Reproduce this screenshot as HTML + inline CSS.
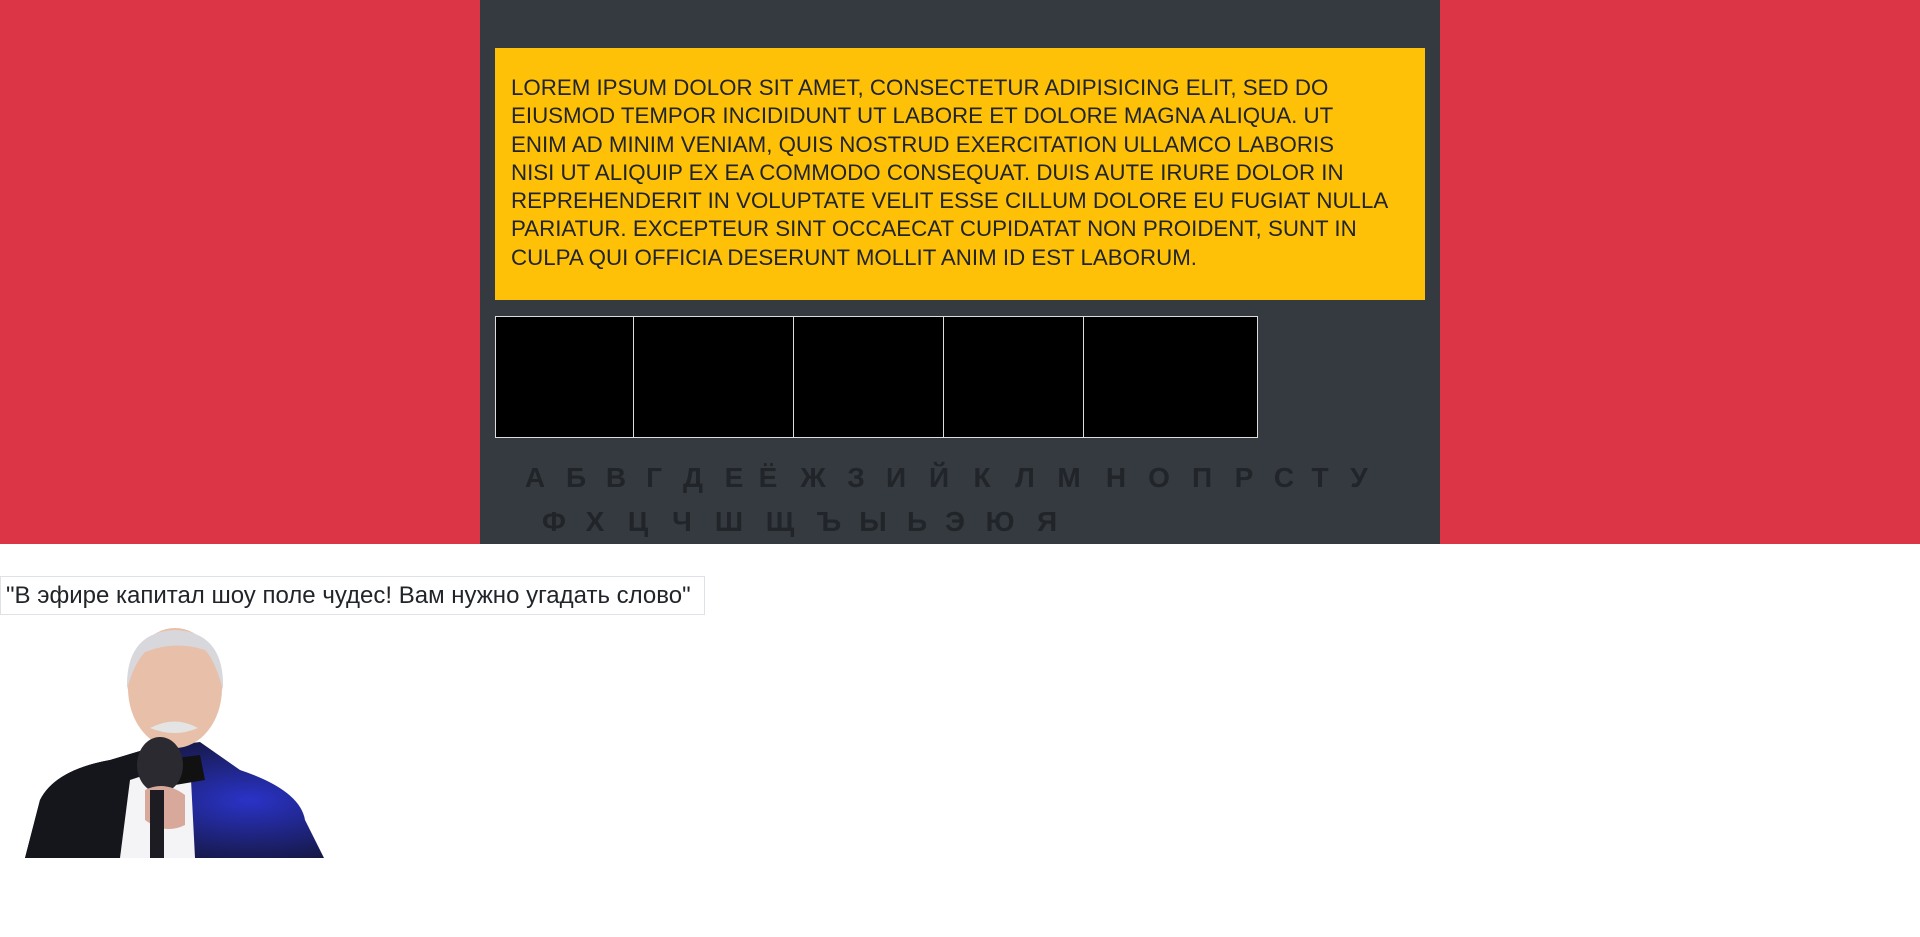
<!DOCTYPE html>
<html><head><meta charset="utf-8"><style>
*{margin:0;padding:0;box-sizing:border-box}
body{width:1920px;height:937px;background:#fff;position:relative;overflow:hidden;font-family:"Liberation Sans","DejaVu Sans",sans-serif}
.red{position:absolute;left:0;top:0;width:1920px;height:544px;background:#dc3545}
.panel{position:absolute;left:480px;top:0;width:960px;height:544px;background:#343a40}
.yel{position:absolute;left:495px;top:48px;width:930px;height:252px;background:#ffc107}
.txt{position:absolute;left:511px;top:74px;color:#212529;font-size:22.3px;line-height:28.3px}
.txt span{display:block;white-space:nowrap}
.bx{position:absolute;top:316px;height:122px;background:#000;border:1px solid #ddd}
.row{position:absolute;color:#212428;font-weight:bold;font-size:28px;white-space:nowrap;line-height:1}
.row b{position:absolute;transform:translateX(-50%)}
.cap{position:absolute;left:0;top:576px;width:705px;height:39px;border:1px solid #dee2e6;font-size:24px;line-height:37px;padding-left:5px;color:#212529;white-space:nowrap}
</style></head><body>
<div class="red"></div>
<div class="panel"></div>
<div class="yel"></div>
<div class="txt">
<span>LOREM IPSUM DOLOR SIT AMET, CONSECTETUR ADIPISICING ELIT, SED DO</span>
<span>EIUSMOD TEMPOR INCIDIDUNT UT LABORE ET DOLORE MAGNA ALIQUA. UT</span>
<span>ENIM AD MINIM VENIAM, QUIS NOSTRUD EXERCITATION ULLAMCO LABORIS</span>
<span>NISI UT ALIQUIP EX EA COMMODO CONSEQUAT. DUIS AUTE IRURE DOLOR IN</span>
<span>REPREHENDERIT IN VOLUPTATE VELIT ESSE CILLUM DOLORE EU FUGIAT NULLA</span>
<span>PARIATUR. EXCEPTEUR SINT OCCAECAT CUPIDATAT NON PROIDENT, SUNT IN</span>
<span>CULPA QUI OFFICIA DESERUNT MOLLIT ANIM ID EST LABORUM.</span>
</div>
<div class="bx" style="left:495px;width:139px"></div>
<div class="bx" style="left:633px;width:161px"></div>
<div class="bx" style="left:793px;width:151px"></div>
<div class="bx" style="left:943px;width:141px"></div>
<div class="bx" style="left:1083px;width:175px"></div>
<div class="row" style="left:0;top:464px">
<b style="left:535px">А</b><b style="left:576px">Б</b><b style="left:616px">В</b><b style="left:654px">Г</b><b style="left:693px">Д</b><b style="left:734px">Е</b><b style="left:768px">Ё</b><b style="left:813px">Ж</b><b style="left:856px">З</b><b style="left:896px">И</b><b style="left:939px">Й</b><b style="left:982px">К</b><b style="left:1025px">Л</b><b style="left:1069px">М</b><b style="left:1116px">Н</b><b style="left:1159px">О</b><b style="left:1202px">П</b><b style="left:1244px">Р</b><b style="left:1284px">С</b><b style="left:1320px">Т</b><b style="left:1359px">У</b>
</div>
<div class="row" style="left:0;top:508px">
<b style="left:554px">Ф</b><b style="left:595px">Х</b><b style="left:638px">Ц</b><b style="left:682px">Ч</b><b style="left:729px">Ш</b><b style="left:780px">Щ</b><b style="left:829px">Ъ</b><b style="left:873px">Ы</b><b style="left:917px">Ь</b><b style="left:955px">Э</b><b style="left:1000px">Ю</b><b style="left:1047px">Я</b>
</div>
<div class="cap">"В эфире капитал шоу поле чудес! Вам нужно угадать слово"</div>
<svg style="position:absolute;left:0;top:620px" width="340" height="250" viewBox="0 0 340 250">
<defs><radialGradient id="bl" cx="0.75" cy="0.5" r="0.6"><stop offset="0" stop-color="#2a33c8"/><stop offset="1" stop-color="#14163a"/></radialGradient></defs>
<path d="M25 238 L40 180 Q55 150 110 140 L150 128 L200 122 L240 150 Q300 170 305 200 L324 238 Z" fill="url(#bl)"/>
<path d="M25 238 L40 180 Q55 150 110 140 L150 128 L150 238 Z" fill="#15151c"/>
<path d="M130 160 L190 140 L195 238 L120 238 Z" fill="#f4f4f6"/>
<path d="M160 140 L200 135 L205 160 L175 165 Z" fill="#111"/>
<ellipse cx="175" cy="68" rx="47" ry="60" fill="#e8bfa8"/>
<path d="M127 70 Q125 12 175 10 Q225 12 223 70 Q215 40 205 30 Q175 20 145 32 Q133 45 127 70Z" fill="#d8d8dc"/>
<path d="M150 108 Q175 95 198 108 Q175 118 150 108Z" fill="#e4e4e4"/>
<ellipse cx="160" cy="145" rx="23" ry="28" fill="#2a2a30"/>
<path d="M145 170 Q165 160 185 175 L185 205 Q165 215 145 200Z" fill="#d8a89a"/>
<rect x="150" y="170" width="14" height="68" fill="#1c1c22"/>
</svg>
</body></html>
